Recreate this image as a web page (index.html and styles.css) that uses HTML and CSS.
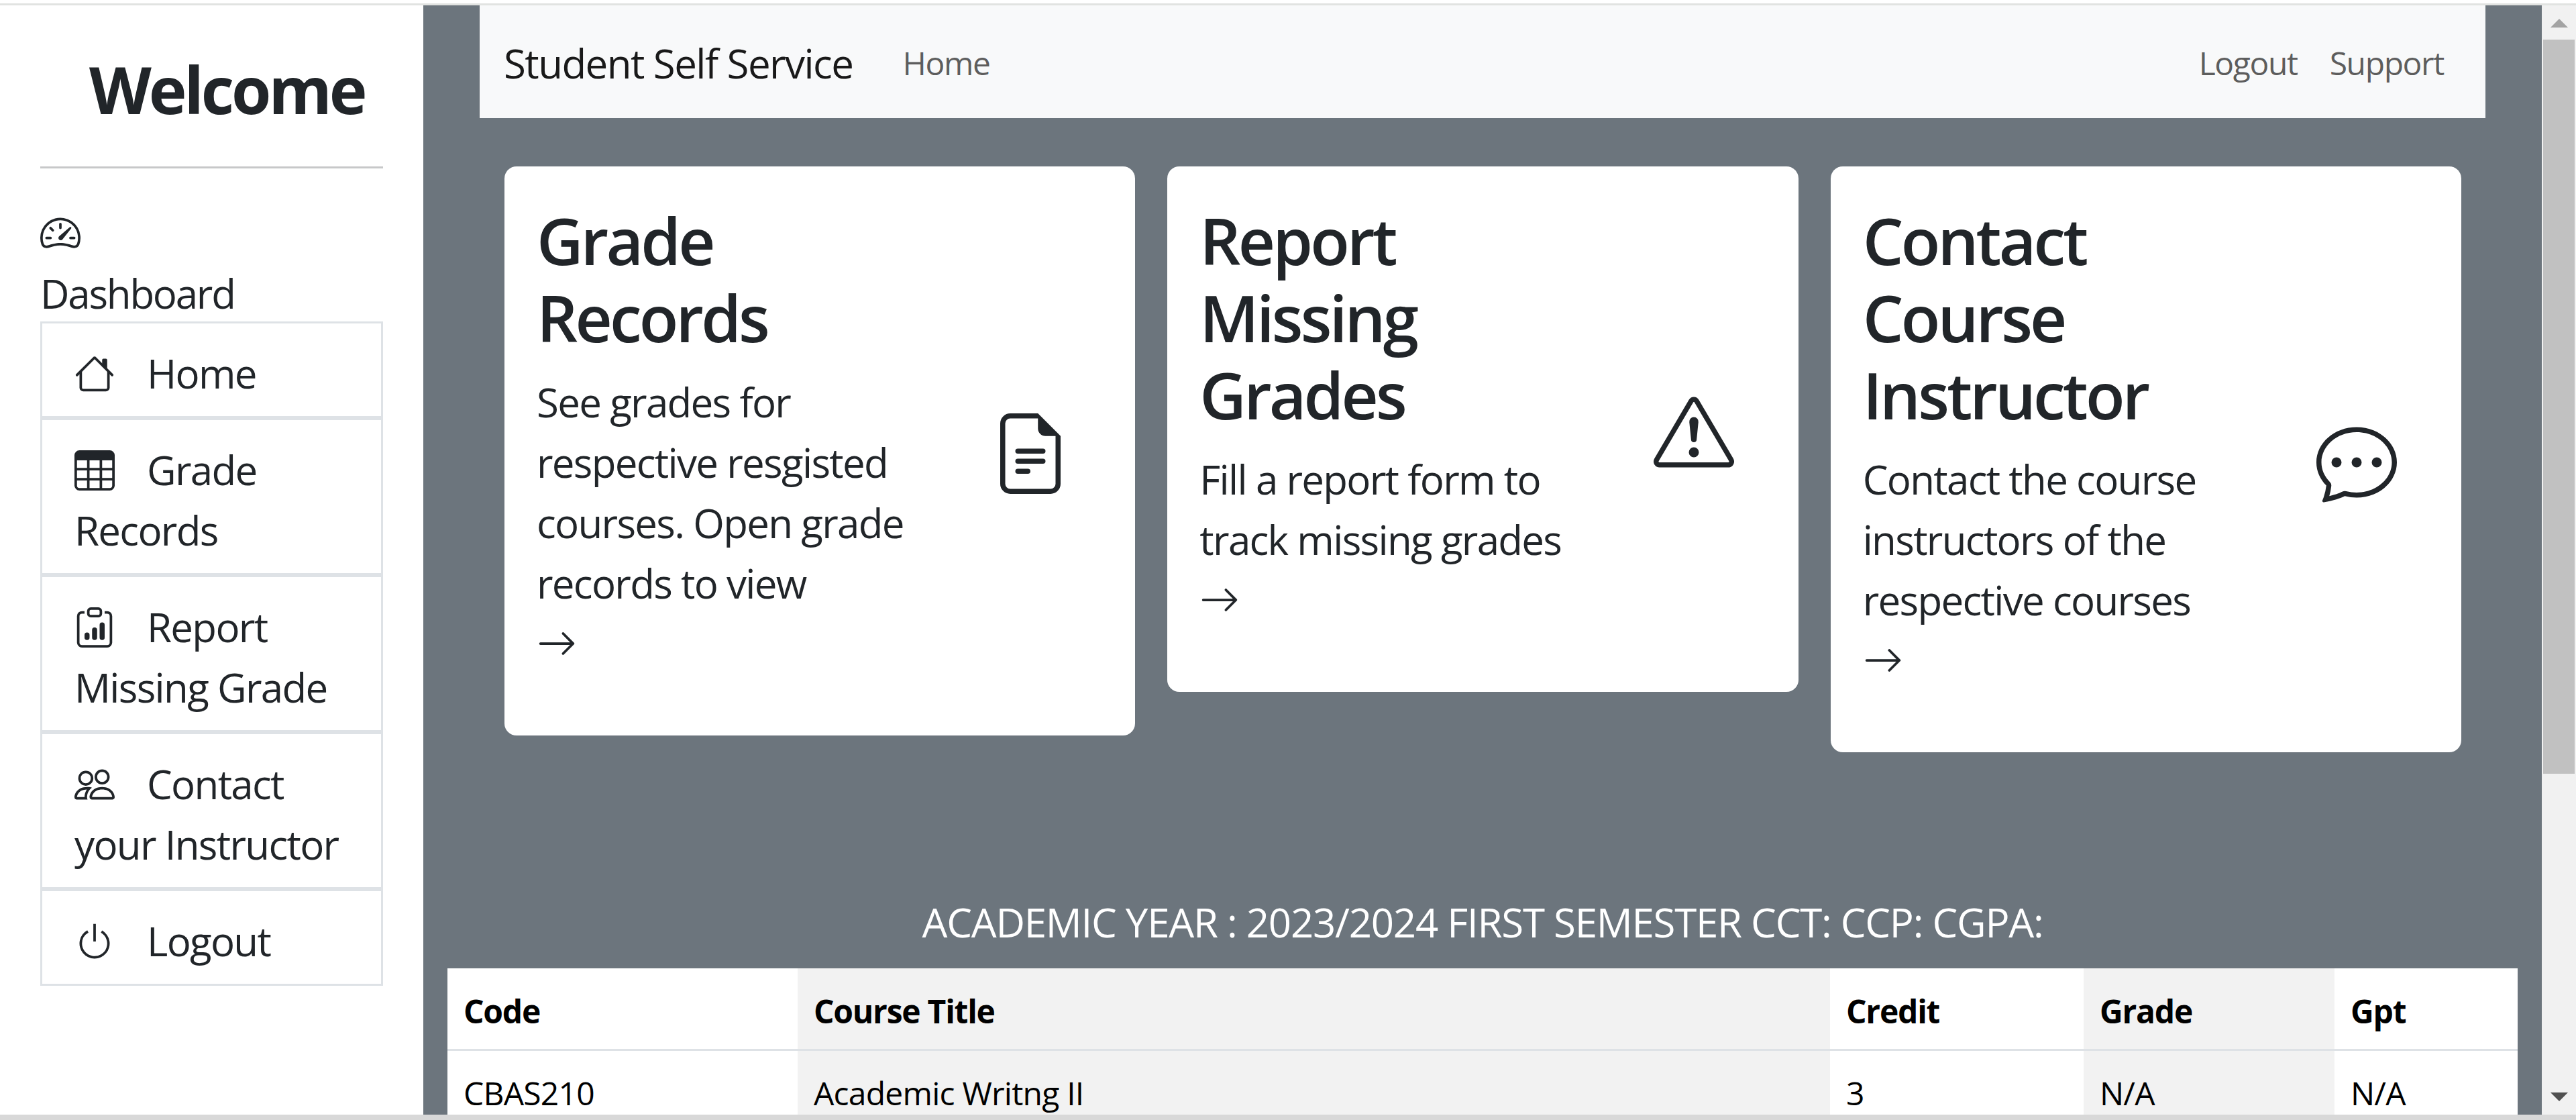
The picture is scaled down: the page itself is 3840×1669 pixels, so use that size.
FILE: index.html
```html
<!DOCTYPE html>
<html lang="en">

<head>
  <meta charset="UTF-8">
  <meta name="viewport" content="width=device-width, initial-scale=1.0">
  <title>Student Self Service</title>
  <link rel="stylesheet" href="styles.css">
</head>

<body>
  <div class="top-edge"></div>
  <div class="frame">
    <aside class="sidebar">
      <h1 class="welcome">Welcome</h1>
      <hr class="rule">
      <a class="dash-link" href="#">
        <svg class="bi" viewBox="0 0 16 16"><path d="M8 4a.5.5 0 0 1 .5.5V6a.5.5 0 0 1-1 0V4.5A.5.5 0 0 1 8 4zM3.732 5.732a.5.5 0 0 1 .707 0l.915.914a.5.5 0 1 1-.708.708l-.914-.915a.5.5 0 0 1 0-.707zM2 10a.5.5 0 0 1 .5-.5h1.586a.5.5 0 0 1 0 1H2.5A.5.5 0 0 1 2 10zm9.5 0a.5.5 0 0 1 .5-.5h1.5a.5.5 0 0 1 0 1H12a.5.5 0 0 1-.5-.5zm.754-4.246a.389.389 0 0 0-.527-.02L7.547 9.31a.91.91 0 1 0 1.302 1.258l3.434-4.297a.389.389 0 0 0-.029-.518z"/><path fill-rule="evenodd" d="M0 10a8 8 0 1 1 15.547 2.661c-.442 1.253-1.845 1.602-2.932 1.25C11.309 13.488 9.475 13 8 13c-1.474 0-3.31.488-4.615.911-1.087.352-2.49.003-2.932-1.25A7.988 7.988 0 0 1 0 10zm8-7a7 7 0 0 0-6.603 9.329c.203.575.923.876 1.68.63C4.397 12.533 6.358 12 8 12s3.604.532 4.923.96c.757.245 1.477-.056 1.68-.631A7 7 0 0 0 8 3z"/></svg>
        <span class="dash-label">Dashboard</span>
      </a>
      <ul class="side-list">
        <li class="side-item">
          <svg class="bi side-icon" viewBox="0 0 16 16"><path fill-rule="evenodd" d="M2 13.5V7h1v6.5a.5.5 0 0 0 .5.5h9a.5.5 0 0 0 .5-.5V7h1v6.5a1.5 1.5 0 0 1-1.5 1.5h-9A1.5 1.5 0 0 1 2 13.5zm11-11V6l-2-2V2.5a.5.5 0 0 1 .5-.5h1a.5.5 0 0 1 .5.5z"/><path fill-rule="evenodd" d="M7.293 1.5a1 1 0 0 1 1.414 0l6.647 6.646a.5.5 0 0 1-.708.708L8 2.207 1.354 8.854a.5.5 0 1 1-.708-.708L7.293 1.5z"/></svg>Home
        </li>
        <li class="side-item">
          <svg class="bi side-icon" viewBox="0 0 16 16"><path d="M0 2a2 2 0 0 1 2-2h12a2 2 0 0 1 2 2v12a2 2 0 0 1-2 2H2a2 2 0 0 1-2-2V2zm15 2h-4v3h4V4zm0 4h-4v3h4V8zm0 4h-4v3h3a1 1 0 0 0 1-1v-2zm-5 3v-3H6v3h4zm-5 0v-3H1v2a1 1 0 0 0 1 1h3zm-4-4h4V8H1v3zm0-4h4V4H1v3zm5-3v3h4V4H6zm4 4H6v3h4V8z"/></svg>Grade Records
        </li>
        <li class="side-item">
          <svg class="bi side-icon" viewBox="0 0 16 16"><path d="M4 11a1 1 0 1 1 2 0v1a1 1 0 1 1-2 0v-1zm6-4a1 1 0 1 1 2 0v5a1 1 0 1 1-2 0V7zM7 9a1 1 0 0 1 2 0v3a1 1 0 1 1-2 0V9z"/><path d="M4 1.5H3a2 2 0 0 0-2 2V14a2 2 0 0 0 2 2h10a2 2 0 0 0 2-2V3.5a2 2 0 0 0-2-2h-1v1h1a1 1 0 0 1 1 1V14a1 1 0 0 1-1 1H3a1 1 0 0 1-1-1V3.5a1 1 0 0 1 1-1h1v-1z"/><path d="M9.5 1a.5.5 0 0 1 .5.5v1a.5.5 0 0 1-.5.5h-3a.5.5 0 0 1-.5-.5v-1a.5.5 0 0 1 .5-.5h3zm-3-1A1.5 1.5 0 0 0 5 1.5v1A1.5 1.5 0 0 0 6.5 4h3A1.5 1.5 0 0 0 11 2.5v-1A1.5 1.5 0 0 0 9.5 0h-3z"/></svg>Report Missing Grade
        </li>
        <li class="side-item">
          <svg class="bi side-icon" viewBox="0 0 16 16"><path d="M15 14s1 0 1-1-1-4-5-4-5 3-5 4 1 1 1 1h8zm-7.978-1A.261.261 0 0 1 7 12.996c.001-.264.167-1.03.76-1.72C8.312 10.629 9.282 10 11 10c1.717 0 2.687.63 3.24 1.276.593.69.758 1.457.76 1.72l-.008.002a.274.274 0 0 1-.014.002H7.022zM11 7a2 2 0 1 0 0-4 2 2 0 0 0 0 4zm3-2a3 3 0 1 1-6 0 3 3 0 0 1 6 0zM6.936 9.28a5.88 5.88 0 0 0-1.23-.247A7.35 7.35 0 0 0 5 9c-4 0-5 3-5 4 0 .667.333 1 1 1h4.216A2.238 2.238 0 0 1 5 13c0-1.01.377-2.042 1.09-2.904.243-.294.526-.569.846-.816zM4.92 10A5.493 5.493 0 0 0 4 13H1c0-.26.164-1.03.76-1.724.545-.636 1.492-1.256 3.16-1.275zM1.5 5.5a3 3 0 1 1 6 0 3 3 0 0 1-6 0zm3-2a2 2 0 1 0 0 4 2 2 0 0 0 0-4z"/></svg>Contact your Instructor
        </li>
        <li class="side-item">
          <svg class="bi side-icon" viewBox="0 0 16 16"><path d="M7.5 1v7h1V1h-1z"/><path d="M3 8.812a4.999 4.999 0 0 1 2.578-4.375l-.485-.874A6 6 0 1 0 11 3.616l-.501.865A5 5 0 1 1 3 8.812z"/></svg>Logout
        </li>
      </ul>
    </aside>

    <main class="main">
      <nav class="navbar">
        <a class="brand" href="#">Student Self Service</a>
        <a class="nav-link nav-home" href="#">Home</a>
        <a class="nav-link nav-push" href="#">Logout</a>
        <a class="nav-link" href="#">Support</a>
      </nav>

      <section class="cards">
        <div class="card">
          <div class="card-text">
            <h3 class="card-title">Grade Records</h3>
            <p class="card-copy">See grades for respective resgisted courses. Open grade records to view
              <svg class="bi arrow" viewBox="0 0 16 16"><path fill-rule="evenodd" d="M1 8a.5.5 0 0 1 .5-.5h11.793l-3.147-3.146a.5.5 0 0 1 .708-.708l4 4a.5.5 0 0 1 0 .708l-4 4a.5.5 0 0 1-.708-.708L13.293 8.5H1.5A.5.5 0 0 1 1 8z"/></svg>
            </p>
          </div>
          <svg class="bi card-icon" viewBox="0 0 16 16"><path d="M5.5 7a.5.5 0 0 0 0 1h5a.5.5 0 0 0 0-1h-5zM5 9.5a.5.5 0 0 1 .5-.5h5a.5.5 0 0 1 0 1h-5a.5.5 0 0 1-.5-.5zm0 2a.5.5 0 0 1 .5-.5h2a.5.5 0 0 1 0 1h-2a.5.5 0 0 1-.5-.5z"/><path d="M9.5 0H4a2 2 0 0 0-2 2v12a2 2 0 0 0 2 2h8a2 2 0 0 0 2-2V4.5L9.5 0zm0 1v2A1.5 1.5 0 0 0 11 4.5h2V14a1 1 0 0 1-1 1H4a1 1 0 0 1-1-1V2a1 1 0 0 1 1-1h5.5z"/></svg>
        </div>
        <div class="card">
          <div class="card-text">
            <h3 class="card-title">Report Missing Grades</h3>
            <p class="card-copy">Fill a report form to track missing grades
              <svg class="bi arrow" viewBox="0 0 16 16"><path fill-rule="evenodd" d="M1 8a.5.5 0 0 1 .5-.5h11.793l-3.147-3.146a.5.5 0 0 1 .708-.708l4 4a.5.5 0 0 1 0 .708l-4 4a.5.5 0 0 1-.708-.708L13.293 8.5H1.5A.5.5 0 0 1 1 8z"/></svg>
            </p>
          </div>
          <svg class="bi card-icon" viewBox="0 0 16 16"><path d="M7.938 2.016A.13.13 0 0 1 8.002 2a.13.13 0 0 1 .063.016.146.146 0 0 1 .054.057l6.857 11.667c.036.06.035.124.002.183a.163.163 0 0 1-.054.06.116.116 0 0 1-.066.017H1.146a.115.115 0 0 1-.066-.017.163.163 0 0 1-.054-.06.176.176 0 0 1 .002-.183L7.884 2.073a.147.147 0 0 1 .054-.057zm1.044-.45a1.13 1.13 0 0 0-1.96 0L.165 13.233c-.457.778.091 1.767.98 1.767h13.713c.889 0 1.438-.99.98-1.767L8.982 1.566z"/><path d="M7.002 12a1 1 0 1 1 2 0 1 1 0 0 1-2 0zM7.1 5.995a.905.905 0 1 1 1.8 0l-.35 3.507a.552.552 0 0 1-1.1 0L7.1 5.995z"/></svg>
        </div>
        <div class="card">
          <div class="card-text">
            <h3 class="card-title">Contact Course Instructor</h3>
            <p class="card-copy">Contact the course instructors of the respective courses
              <svg class="bi arrow" viewBox="0 0 16 16"><path fill-rule="evenodd" d="M1 8a.5.5 0 0 1 .5-.5h11.793l-3.147-3.146a.5.5 0 0 1 .708-.708l4 4a.5.5 0 0 1 0 .708l-4 4a.5.5 0 0 1-.708-.708L13.293 8.5H1.5A.5.5 0 0 1 1 8z"/></svg>
            </p>
          </div>
          <svg class="bi card-icon" viewBox="0 0 16 16"><path d="M5 8a1 1 0 1 1-2 0 1 1 0 0 1 2 0zm4 0a1 1 0 1 1-2 0 1 1 0 0 1 2 0zm3 1a1 1 0 1 0 0-2 1 1 0 0 0 0 2z"/><path d="m2.165 15.803.02-.004c1.83-.363 2.948-.842 3.468-1.105A9.06 9.06 0 0 0 8 15c4.418 0 8-3.134 8-7s-3.582-7-8-7-8 3.134-8 7c0 1.76.743 3.37 1.97 4.6a10.437 10.437 0 0 1-.524 2.318l-.003.011a10.722 10.722 0 0 1-.244.637c-.079.186.074.394.273.362a21.673 21.673 0 0 0 .693-.125zm.8-3.108a1 1 0 0 0-.287-.801C1.618 10.83 1 9.468 1 8c0-3.192 3.004-6 7-6s7 2.808 7 6c0 3.193-3.004 6-7 6a8.06 8.06 0 0 1-2.088-.272 1 1 0 0 0-.711.074c-.387.196-1.24.57-2.634.893a10.97 10.97 0 0 0 .398-2z"/></svg>
        </div>
      </section>

      <h4 class="year-title">ACADEMIC YEAR : 2023/2024 FIRST SEMESTER CCT: CCP: CGPA:</h4>

      <table class="grades">
        <colgroup>
          <col class="col-code">
          <col class="col-title">
          <col class="col-credit">
          <col class="col-grade">
          <col class="col-gpt">
        </colgroup>
        <thead>
          <tr>
            <th>Code</th>
            <th>Course Title</th>
            <th>Credit</th>
            <th>Grade</th>
            <th>Gpt</th>
          </tr>
        </thead>
        <tbody>
          <tr>
            <td>CBAS210</td>
            <td>Academic Writng II</td>
            <td>3</td>
            <td>N/A</td>
            <td>N/A</td>
          </tr>
        </tbody>
      </table>
    </main>

    <div class="scrollbar">
      <span class="arrow-up"></span>
      <div class="thumb"></div>
      <span class="arrow-down"></span>
    </div>
  </div>
  <div class="bottom-edge"></div>
</body>

</html>
```

FILE: styles.css
```css
* {
  box-sizing: border-box;
}
html, body {
  height: 100%;
}
body {
  margin: 0;
  display: flex;
  flex-direction: column;
  overflow: hidden;
  background: #fff;
  color: #212529;
  font-family: "Open Sans", "Noto Sans", sans-serif;
  font-size: 48px;
  line-height: 1.5;
  letter-spacing: -0.035em;
}
a {
  color: inherit;
  text-decoration: none;
}
.top-edge {
  height: 8px;
  flex: none;
  background: #fff;
  border-bottom: 3px solid #e1e3e1;
}
.bottom-edge {
  height: 8px;
  flex: none;
  background: #d8d8d8;
}
.frame {
  flex: 1;
  min-height: 0;
  display: flex;
}
.bi {
  fill: currentColor;
  width: 60px;
  height: 60px;
  vertical-align: -.125em;
}

/* sidebar */
.sidebar {
  width: 631px;
  flex: none;
  padding: 0 60px;
}
.welcome {
  margin: 67px 0 0 73px;
  font-size: 96px;
  line-height: 115px;
  font-weight: 700;
  letter-spacing: -0.042em;
  white-space: nowrap;
}
.rule {
  margin: 58px 0 66px;
  border: 0;
  border-top: 3px solid #c7c8c9;
}
.dash-link {
  display: block;
  font-size: 60px;
}
.dash-link .bi {
  display: block;
  margin-bottom: 12px;
}
.dash-label {
  display: block;
  padding-top: 3px;
  margin-bottom: -3px;
  line-height: 90px;
  letter-spacing: -0.037em;
}
.side-list {
  list-style: none;
  margin: 0;
  padding: 0;
}
.side-item {
  padding: 29px 48px 19px;
  border: 3px solid #dee2e6;
  font-size: 60px;
  line-height: 90px;
}
.side-icon {
  margin-right: 48px;
}

/* main column */
.main {
  flex: 1;
  min-width: 0;
  overflow: hidden;
  padding: 0 36px;
  background: #6c757d;
}
.navbar {
  display: flex;
  align-items: center;
  height: 168px;
  margin: 0 48px;
  padding: 3px 38px 0 36px;
  background: #f8f9fa;
}
.brand {
  font-size: 60px;
  letter-spacing: -1.55px;
  color: rgba(0, 0, 0, .9);
}
.nav-link {
  padding: 0 24px;
  letter-spacing: -1.4px;
  color: rgba(0, 0, 0, .65);
}
.nav-home {
  margin-left: 50px;
}
.nav-push {
  margin-left: auto;
}

/* cards */
.cards {
  display: grid;
  grid-template-columns: repeat(3, 1fr);
  gap: 48px;
  align-items: start;
  margin-top: 72px;
  padding: 0 84px 0 85px;
}
.card {
  display: flex;
  align-items: center;
  padding: 48px;
  background: #fff;
  border-radius: 18px;
}
.card-text {
  width: 562px;
  flex: none;
  padding-top: 4px;
}
.card-title {
  margin: 0 0 24px;
  font-size: 96px;
  line-height: 115px;
  font-weight: 600;
  letter-spacing: -0.04em;
}
.card-copy {
  margin: 0 0 44px;
  padding-bottom: 15px;
  font-size: 60px;
  line-height: 90px;
}
.arrow {
  display: block;
  margin-top: 15px;
}
.card-icon {
  width: 120px;
  height: 120px;
  flex: none;
  margin: 8px 48px 0 auto;
}

/* grades table */
.year-title {
  margin: 208px 0 24px;
  color: #fff;
  font-size: 60px;
  line-height: 90px;
  font-weight: 400;
  letter-spacing: -0.021em;
  text-align: center;
}
.grades {
  width: 100%;
  table-layout: fixed;
  border-collapse: collapse;
  background: #fff;
  color: #000;
}
.grades th, .grades td {
  padding: 24px;
  text-align: left;
  line-height: 72px;
}
.grades th {
  padding-top: 28px;
  padding-bottom: 20px;
  font-weight: 700;
  letter-spacing: -0.026em;
  border-bottom: 3px solid #dee2e6;
}
.grades td {
  padding-top: 27px;
  letter-spacing: -0.016em;
}
.col-code { width: 522px; }
.col-title { width: 1539px; background: #f2f2f2; }
.col-credit { width: 378px; }
.col-grade { width: 374px; background: #f2f2f2; }
.col-gpt { width: 273px; }

/* drawn scrollbar */
.scrollbar {
  width: 51px;
  flex: none;
  display: flex;
  flex-direction: column;
  align-items: center;
  background: #f1f1f1;
}
.arrow-up {
  margin-top: 20px;
  border-left: 13px solid transparent;
  border-right: 13px solid transparent;
  border-bottom: 13px solid #a3a3a3;
}
.thumb {
  width: 47px;
  height: 1094px;
  margin-top: 18px;
  background: #c1c1c1;
}
.arrow-down {
  margin-top: auto;
  margin-bottom: 20px;
  border-left: 13px solid transparent;
  border-right: 13px solid transparent;
  border-top: 13px solid #505050;
}
```
